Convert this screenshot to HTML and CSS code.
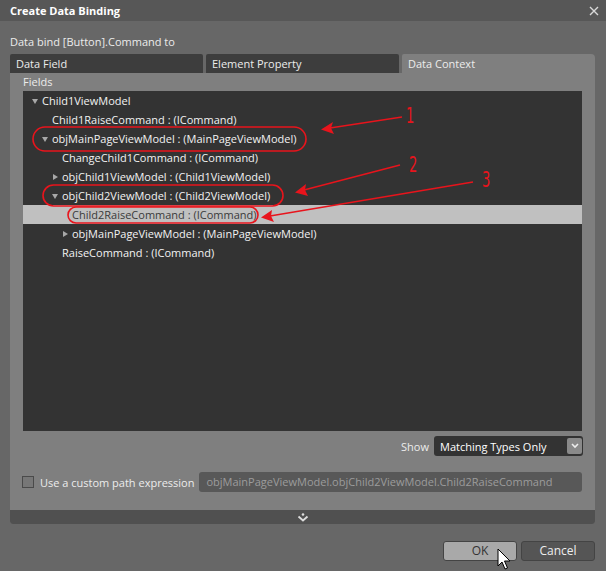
FILE: index.html
```html
<!DOCTYPE html>
<html>
<head>
    <meta charset="UTF-8">
    <title>Create Data Binding</title>
    <link rel="stylesheet" href="styles.css">
</head>
<body>
<div class="dialog">
    <div class="titlebar">
        <span class="title">Create Data Binding</span>
        <svg class="close" width="10" height="10" viewBox="0 0 10 10"><path d="M1 1 L9 9 M9 1 L1 9" stroke="#d8d8d8" stroke-width="1.4"/></svg>
    </div>
    <div class="content">
        <div class="bind-label">Data bind [Button].Command to</div>
        <div class="tabs">
            <div class="tab">Data Field</div>
            <div class="tab">Element Property</div>
            <div class="tab active">Data Context</div>
        </div>
        <div class="panel">
            <div class="fields-label">Fields</div>
            <div class="tree">
                <div class="row d0"><span class="exp open"></span>Child1ViewModel</div>
                <div class="row d1"><span class="exp"></span>Child1RaiseCommand : (ICommand)</div>
                <div class="row d1"><span class="exp open"></span>objMainPageViewModel : (MainPageViewModel)</div>
                <div class="row d2"><span class="exp"></span>ChangeChild1Command : (ICommand)</div>
                <div class="row d2"><span class="exp closed"></span>objChild1ViewModel : (Child1ViewModel)</div>
                <div class="row d2"><span class="exp open"></span>objChild2ViewModel : (Child2ViewModel)</div>
                <div class="row d3 selected"><span class="exp"></span>Child2RaiseCommand : (ICommand)</div>
                <div class="row d3"><span class="exp closed"></span>objMainPageViewModel : (MainPageViewModel)</div>
                <div class="row d2"><span class="exp"></span>RaiseCommand : (ICommand)</div>
            </div>
            <div class="show-row">
                <span class="show-label">Show</span>
                <div class="select">
                    <span>Matching Types Only</span>
                    <span class="select-btn"><svg width="8" height="6" viewBox="0 0 8 6"><path d="M1 1 L4 4 L7 1" fill="none" stroke="#eee" stroke-width="1.6"/></svg></span>
                </div>
            </div>
            <div class="path-row">
                <span class="checkbox"></span>
                <span class="path-label">Use a custom path expression</span>
                <div class="path-input">objMainPageViewModel.objChild2ViewModel.Child2RaiseCommand</div>
            </div>
            <div class="expander">
                <svg width="12" height="9" viewBox="0 0 12 9"><circle cx="6" cy="1.5" r="1.3" fill="#ddd"/><path d="M1.5 3.5 L6 7.5 L10.5 3.5" fill="none" stroke="#ddd" stroke-width="1.8"/></svg>
            </div>
        </div>
        <div class="buttons">
            <div class="btn ok">OK</div>
            <div class="btn">Cancel</div>
        </div>
    </div>

    <svg class="marks" width="606" height="571" viewBox="0 0 606 571">
        <g fill="none" stroke="#e8141c" stroke-width="1.6">
            <rect x="33" y="127" width="273" height="24" rx="12"/>
            <rect x="43" y="185" width="240" height="21" rx="10.5"/>
            <rect x="68" y="207" width="190" height="16" rx="8"/>
            <path d="M402 117 L330 128"/>
            <path d="M400 165 L304 190"/>
            <path d="M473 182 L270 216"/>
        </g>
        <g fill="#e8141c">
            <path d="M321 129.5 L333 122 L331 128 L334 134 Z"/>
            <path d="M295 192.5 L306 184 L305 190 L308 196 Z"/>
            <path d="M261 217.5 L272 210 L271 216 L274 222 Z"/>
        </g>
        <g class="nums" fill="#e8141c">
            <text x="406" y="123" transform="translate(406 0) scale(0.62 1) translate(-406 0)">1</text>
            <text x="409" y="172" transform="translate(409 0) scale(0.62 1) translate(-409 0)">2</text>
            <text x="482" y="187" transform="translate(482 0) scale(0.62 1) translate(-482 0)">3</text>
        </g>
    </svg>

    <svg class="cursor" width="14" height="23" viewBox="0 0 14 23"><path d="M1 1 L1 18 L5 14 L8 21 L10.5 20 L7.5 13 L13 13 Z" fill="#fff" stroke="#000" stroke-width="1"/></svg>
</div>
</body>
</html>
```

FILE: styles.css
```css
body {
  margin: 0;
  background-color: #676767;
  font-family: "Open Sans", "Noto Sans", sans-serif;
  font-size: 11px;
  color: #ececec;
}

.dialog {
  position: relative;
  width: 606px;
  height: 571px;
  overflow: hidden;
  background-color: #676767;
}

.titlebar {
  height: 21px;
  background-color: #575757;
  display: flex;
  align-items: center;
  justify-content: space-between;
  padding: 0 7px 0 10px;
}

.title {
  font-weight: bold;
  font-size: 11px;
  color: #fff;
}

.content {
  padding: 0 11px 0 10px;
}

.bind-label {
  height: 20px;
  line-height: 20px;
  margin-top: 11px;
}

.tabs {
  display: flex;
  gap: 3px;
  margin-top: 2px;
  height: 19px;
}

.tab {
  flex: 1;
  background-color: #3d3d3d;
  line-height: 19px;
  padding-left: 6px;
  border-radius: 2px 2px 0 0;
}

.tab.active {
  background-color: #7f7f7f;
  border-radius: 2px 4px 0 0;
}

.panel {
  background-color: #7f7f7f;
  height: 451px;
  display: flex;
  flex-direction: column;
  border-radius: 0 0 3px 3px;
}

.fields-label {
  padding-left: 13px;
  line-height: 18px;
  height: 18px;
}

.tree {
  margin: 0 13px 0 13px;
  height: 340px;
  background-color: #333;
  color: #f2f2f2;
}

.row {
  height: 19px;
  line-height: 19px;
  display: flex;
  align-items: center;
  white-space: nowrap;
}

.row.selected {
  background-color: #c0c0c0;
  color: #3a3a3a;
}

.d0 { padding-left: 9px; }
.d1 { padding-left: 19px; }
.d2 { padding-left: 29px; }
.d3 { padding-left: 39px; }

.exp {
  width: 10px;
  height: 8px;
  flex: none;
  position: relative;
}

.exp.open::before {
  content: "";
  position: absolute;
  left: 0;
  top: 2px;
  border-left: 3.5px solid transparent;
  border-right: 3.5px solid transparent;
  border-top: 5px solid #a8a8a8;
}

.exp.closed::before {
  content: "";
  position: absolute;
  left: 1px;
  top: 1px;
  border-top: 3.5px solid transparent;
  border-bottom: 3.5px solid transparent;
  border-left: 5px solid #a8a8a8;
}

.show-row {
  display: flex;
  justify-content: flex-end;
  align-items: center;
  gap: 5px;
  margin: 5px 12px 0 0;
  height: 20px;
}

.select {
  width: 149px;
  height: 20px;
  background-color: #333;
  border-radius: 3px;
  display: flex;
  align-items: center;
  justify-content: space-between;
  padding: 0 1px 0 6px;
  box-sizing: border-box;
  color: #fff;
}

.select-btn {
  width: 15px;
  height: 16px;
  background-color: #8a8a8a;
  border-radius: 2px;
  display: flex;
  align-items: center;
  justify-content: center;
}

.path-row {
  display: flex;
  align-items: center;
  margin: 16px 13px 0 12px;
  height: 20px;
}

.checkbox {
  width: 10px;
  height: 10px;
  border: 1px solid #4a4a4a;
  background-color: #777;
  margin-right: 6px;
}

.path-label {
  flex: none;
}

.path-input {
  margin-left: 5px;
  flex: 1;
  height: 20px;
  line-height: 20px;
  background-color: #585858;
  border-radius: 3px;
  padding-left: 7px;
  color: #9c9c9c;
  white-space: nowrap;
  overflow: hidden;
}

.expander {
  margin-top: auto;
  height: 14px;
  background-color: #505050;
  display: flex;
  align-items: center;
  justify-content: center;
  border-radius: 0 0 3px 3px;
}

.buttons {
  display: flex;
  justify-content: flex-end;
  gap: 4px;
  margin-top: 17px;
}

.btn {
  width: 72px;
  height: 18px;
  line-height: 18px;
  text-align: center;
  border: 1px solid #444;
  border-radius: 3px;
  background-color: #555;
  color: #eee;
  font-size: 12px;
}

.btn.ok {
  background-color: #a9a9a9;
  color: #333;
}

.marks {
  position: absolute;
  left: 0;
  top: 0;
  pointer-events: none;
}

.nums text {
  font-family: "DejaVu Sans", sans-serif;
  font-size: 21px;
}

.cursor {
  position: absolute;
  left: 497px;
  top: 548px;
}
```
